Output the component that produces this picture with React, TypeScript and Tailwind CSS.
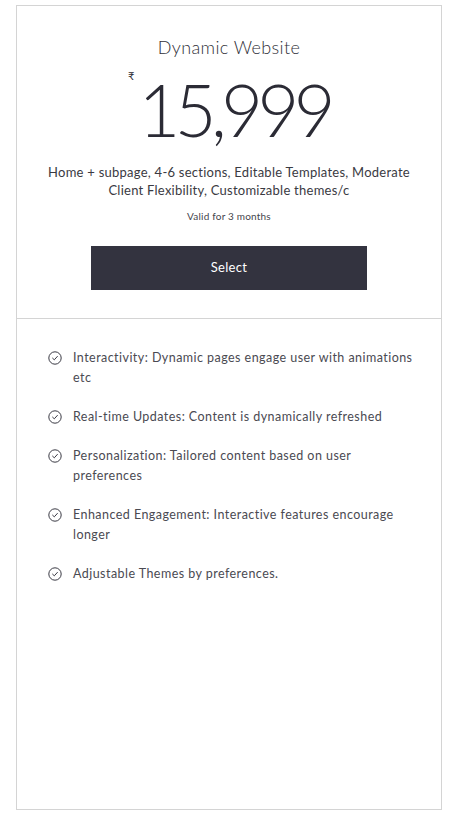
import React from "react";

const features = [
  "Interactivity: Dynamic pages engage user with animations etc",
  "Real-time Updates: Content is dynamically refreshed",
  "Personalization: Tailored content based on user preferences",
  "Enhanced Engagement: Interactive features encourage longer",
  "Adjustable Themes by preferences.",
];

function CheckIcon() {
  return (
    <svg width="14" height="14" viewBox="0 0 14 14" fill="none" className="shrink-0 mt-[3px]">
      <circle cx="7" cy="7" r="6.2" stroke="#3a3a44" strokeWidth="1" />
      <path d="M4.6 7.2 L6.3 8.8 L9.4 5.4" stroke="#3a3a44" strokeWidth="1" strokeLinecap="round" strokeLinejoin="round" />
    </svg>
  );
}

export default function App() {
  return (
    <div className="bg-white min-h-[816px] pt-[5px] pl-[16px]" style={{ fontFamily: "Lato, 'Open Sans', sans-serif" }}>
      <div className="w-[426px] h-[805px] border border-[#d4d4d4] flex flex-col">
        <div className="h-[313px] flex flex-col items-center border-b border-[#d4d4d4] pt-[31px]">
          <h1 className="text-[18px] font-light text-[#2f2f38] leading-[20px] tracking-[0.4px]">Dynamic Website</h1>
          <div className="flex items-start mt-[17px] text-[#2b2b35]">
            <span className="text-[11px] mt-[-6px] mr-[4px]">₹</span>
            <span className="text-[72px] font-light leading-[70px] tracking-[-5.5px]">15,999</span>
          </div>
          <p className="mt-[19px] px-[28px] text-center text-[13px] leading-[18px] text-[#3a3a42] tracking-[0.25px]">
            Home + subpage, 4-6 sections, Editable Templates, Moderate Client Flexibility, Customizable themes/c
          </p>
          <p className="mt-[10px] text-[10px] text-[#44444c] tracking-[0.2px]">Valid for 3 months</p>
          <button className="mt-[22px] w-[276px] h-[44px] bg-[#33333f] text-white text-[13px] tracking-[0.3px]">Select</button>
        </div>
        <ul className="flex flex-col gap-[19px] pt-[29px] pl-[31px] pr-[22px]">
          {features.map((f) => (
            <li key={f} className="flex gap-[11px] items-start">
              <CheckIcon />
              <span className="text-[12.5px] leading-[20px] text-[#4a4a52] tracking-[0.45px]">{f}</span>
            </li>
          ))}
        </ul>
      </div>
    </div>
  );
}
